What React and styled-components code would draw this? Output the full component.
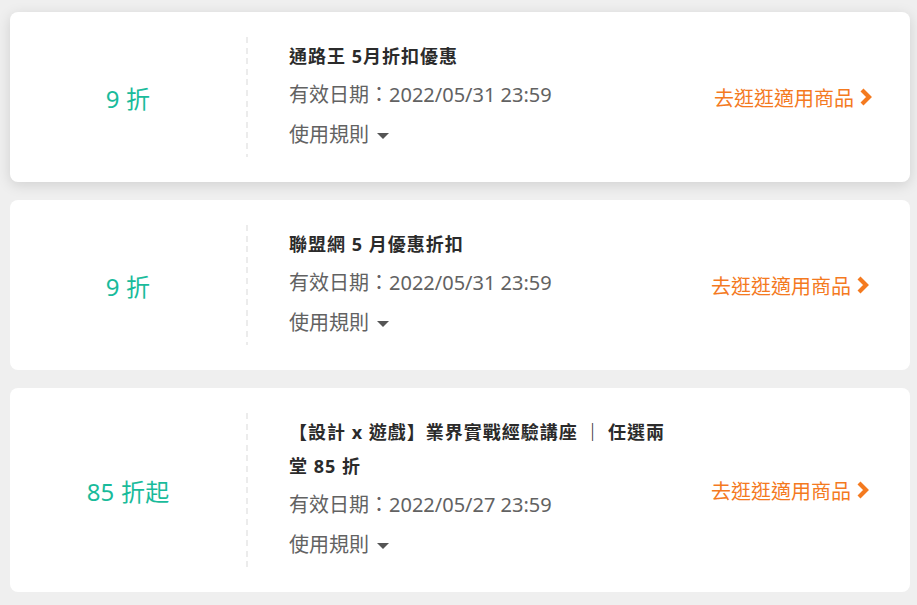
import React from "react";
import styled, { createGlobalStyle, css } from "styled-components";

const GlobalStyle = createGlobalStyle`
  html, body {
    margin: 0;
    padding: 0;
    background: #efefef;
  }
  body {
    font-family: "Noto Sans", "Noto Sans CJK TC", sans-serif;
    -webkit-font-smoothing: antialiased;
  }
`;

const Page = styled.div`
  display: flex;
  flex-direction: column;
  gap: 18px;
  padding: 12px 7px 12px 10px;
`;

const Card = styled.div`
  display: flex;
  align-items: stretch;
  background: #fff;
  border-radius: 8px;
  padding: 25px 40px 25px 0;
  ${(p) =>
    p.$raised &&
    css`
      box-shadow: 0 3px 14px rgba(0, 0, 0, 0.13);
    `}
`;

const Discount = styled.div`
  width: 236px;
  flex: none;
  display: flex;
  align-items: center;
  justify-content: center;
  font-size: 24px;
  color: #19bb9b;
  letter-spacing: 0.2px;
`;

const Divider = styled.div`
  width: 2px;
  flex: none;
  background: repeating-linear-gradient(
    to bottom,
    #ececec 0,
    #ececec 6px,
    transparent 6px,
    transparent 10.6px
  );
`;

const Info = styled.div`
  flex: 1;
  display: flex;
  flex-direction: column;
  justify-content: center;
  padding: 2px 0 2px 41px;
  min-width: 0;
`;

const Title = styled.div`
  font-size: 18px;
  font-weight: 700;
  line-height: 34px;
  letter-spacing: 1px;
  color: #2b2b2b;
  max-width: 385px;
`;

const Meta = styled.div`
  font-size: 20px;
  line-height: 40px;
  color: #626262;
  margin-top: ${(p) => (p.$first ? "2px" : "0")};
`;

const Rules = styled(Meta)`
  display: flex;
  align-items: center;
  gap: 8px;
`;

const Caret = styled.span`
  width: 0;
  height: 0;
  border-left: 6px solid transparent;
  border-right: 6px solid transparent;
  border-top: 6px solid #555;
  margin-top: 2px;
`;

const Action = styled.a`
  display: flex;
  align-items: center;
  gap: 5px;
  align-self: center;
  font-size: 20px;
  color: #f47a1f;
  text-decoration: none;
  white-space: nowrap;
  margin-right: ${(p) => (p.$shift ? "-3px" : "0")};
`;

const Chevron = () => (
  <svg width="14" height="18" viewBox="0 0 14 18" aria-hidden="true">
    <path
      d="M3 2 L10 9 L3 16"
      fill="none"
      stroke="#f47a1f"
      strokeWidth="4.2"
      strokeLinecap="butt"
      strokeLinejoin="miter"
    />
  </svg>
);

const coupons = [
  {
    discount: "9 折",
    title: "通路王 5月折扣優惠",
    date: "2022/05/31 23:59",
    raised: true,
  },
  {
    discount: "9 折",
    title: "聯盟網 5 月優惠折扣",
    date: "2022/05/31 23:59",
  },
  {
    discount: "85 折起",
    title: "【設計 x 遊戲】業界實戰經驗講座 ｜ 任選兩堂 85 折",
    date: "2022/05/27 23:59",
  },
];

export default function App() {
  return (
    <>
      <GlobalStyle />
      <Page>
        {coupons.map((c, i) => (
          <Card key={i} $raised={c.raised}>
            <Discount>{c.discount}</Discount>
            <Divider />
            <Info>
              <Title>{c.title}</Title>
              <Meta $first>有效日期：{c.date}</Meta>
              <Rules>
                使用規則
                <Caret />
              </Rules>
            </Info>
            <Action href="#" $shift={c.raised}>
              去逛逛適用商品
              <Chevron />
            </Action>
          </Card>
        ))}
      </Page>
    </>
  );
}
